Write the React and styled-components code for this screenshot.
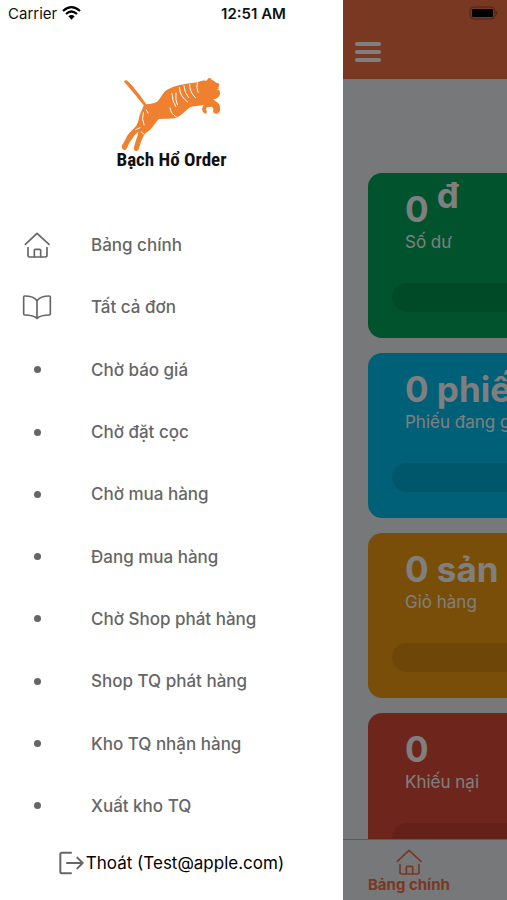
import React from 'react';
import styled, { createGlobalStyle } from 'styled-components';

const GlobalStyle = createGlobalStyle`
    * {
        box-sizing: border-box;
    }

    body {
        margin: 0;
        background: #fff;
        font-family: Inter, 'Noto Sans', sans-serif;
    }
`;

const Screen = styled.div`
    position: relative;
    display: grid;
    grid-template-columns: 23fr 11fr;
    height: 100vh;
    overflow: hidden;
`;

const StatusBar = styled.div`
    position: absolute;
    top: 0;
    left: 0;
    right: 0;
    z-index: 2;
    display: grid;
    grid-template-columns: 1fr auto 1fr;
    align-items: center;
    height: 26px;
    padding: 0 8px;
    font-size: 15px;
    color: #111;
    pointer-events: none;
`;

const Carrier = styled.div`
    display: flex;
    align-items: center;
    gap: 5px;
`;

const Clock = styled.div`
    font-weight: 600;
`;

const BatteryIcon = styled.svg`
    justify-self: end;
`;

const Drawer = styled.aside`
    display: flex;
    flex-direction: column;
    min-width: 0;
    min-height: 0;
    background: #fff;
`;

const Logo = styled.div`
    display: flex;
    flex-direction: column;
    align-items: center;
    height: 214px;
    padding-top: 75px;
`;

const LogoText = styled.div`
    font-family: 'Roboto Condensed', Roboto, sans-serif;
    font-size: 19px;
    line-height: 14px;
    font-weight: 700;
    color: #111;
    white-space: nowrap;
`;

const Menu = styled.nav`
    flex: 1;
    display: flex;
    flex-direction: column;
    min-height: 0;
`;

const MenuItem = styled.a`
    flex: 1;
    display: grid;
    grid-template-columns: 74px 1fr;
    align-items: center;
    column-gap: 17px;
    font-size: 17px;
    font-weight: 500;
    color: #666;
    text-decoration: none;
`;

const MenuIcon = styled.span`
    display: flex;
    justify-content: center;
`;

const Dot = styled.span`
    width: 7px;
    height: 7px;
    border-radius: 50%;
    background: #666;
`;

const Logout = styled.button`
    display: flex;
    align-items: center;
    justify-content: center;
    gap: 2px;
    height: 52px;
    margin-bottom: 11px;
    padding: 0;
    border: none;
    background: none;
    font: inherit;
    font-size: 17px;
    color: #000;
`;

const Page = styled.div`
    position: relative;
    min-width: 0;
    min-height: 0;
    overflow: hidden;
`;

const Scrim = styled.div`
    position: absolute;
    inset: 0;
    background: rgba(0, 0, 0, 0.5);
`;

// the page keeps its full width while the drawer pushes it aside
const PageContent = styled.div`
    display: flex;
    flex-direction: column;
    width: 100vw;
    height: 100%;
    background: #eef0f2;
`;

const Header = styled.header`
    display: flex;
    align-items: flex-end;
    height: 79px;
    padding: 0 12px 17px;
    background: #f07044;
`;

const Hamburger = styled.button`
    display: flex;
    flex-direction: column;
    gap: 4px;
    padding: 0;
    border: none;
    background: none;
`;

const Line = styled.span`
    width: 26px;
    height: 4px;
    border-radius: 2px;
    background: #fff;
`;

const Cards = styled.main`
    flex: 1;
    display: flex;
    flex-direction: column;
    gap: 15px;
    min-height: 0;
    padding: 94px 25px 0;
    overflow: hidden;
`;

const Card = styled.section`
    flex: none;
    display: flex;
    flex-direction: column;
    height: 165px;
    padding: 14px 24px 26px;
    border-radius: 14px;
    background: ${props => props.$color};
    color: #fff;
`;

const Amount = styled.div`
    padding-left: 13px;
    font-size: 35px;
    line-height: 45px;
    font-weight: 700;
`;

const Currency = styled.span`
    line-height: 0;
    vertical-align: 14px;
`;

const CardLabel = styled.div`
    padding-left: 13px;
    font-size: 17px;
    line-height: 20px;
`;

const CardFooter = styled.div`
    height: 29px;
    margin-top: auto;
    border-radius: 15px;
    background: rgba(0, 0, 0, 0.1);
`;

const TabBar = styled.nav`
    display: flex;
    height: 61px;
    border-top: 1px solid #b4b5b7;
`;

const Tab = styled.a`
    display: flex;
    flex-direction: column;
    align-items: center;
    width: 26%;
    padding-top: 8px;
    font-size: 15px;
    line-height: 18px;
    font-weight: 700;
    color: #f07044;
    text-decoration: none;
`;

const HomeIcon = () =>
    <svg width="28" height="28" viewBox="0 0 84 84" fill="none" stroke="currentColor" strokeWidth="5" strokeLinecap="round" strokeLinejoin="round">
        <path d="M7 40 L42 7 L78 40" />
        <path d="M15 50 V73 Q15 78 20 78 H67 Q72 78 72 73 V50" />
        <path d="M34 77 V58 Q34 55 37 55 H50 Q53 55 53 58 V77" />
    </svg>;

const BookIcon = () =>
    <svg width="30" height="26" viewBox="65 221 90 78" fill="none" stroke="currentColor" strokeWidth="5" strokeLinecap="round" strokeLinejoin="round">
        <path d="M110 241 C102 230 88 227 73 227 Q70 227 70 231 V281 Q70 284 73 284 C90 284 101 286 110 294 C119 286 130 284 147 284 Q150 284 150 281 V231 Q150 227 147 227 C132 227 118 230 110 241 V294" />
    </svg>;

const LogoutIcon = () =>
    <svg width="25" height="24" viewBox="186 395 75 72" fill="none" stroke="#666" strokeWidth="6" strokeLinecap="round" strokeLinejoin="round">
        <path d="M222 400 H195 Q190 400 190 405 V457 Q190 462 195 462 H222" />
        <path d="M210 431 H257 M241 415 L257 431 L241 447" />
    </svg>;

const WifiIcon = () =>
    <svg width="19" height="14" viewBox="0 0 57 42" fill="none" stroke="#000" strokeWidth="6.5">
        <path d="M3 15 Q28 -8 54 15" />
        <path d="M12 24 Q28 9 45 24" />
        <path d="M28.5 41 L19 31 Q28.5 23 38 31 Z" fill="#000" stroke="none" />
    </svg>;

const Tiger = () =>
    <svg width="104" height="78" viewBox="24 10 312 234">
        <path
            fill="#ee8030"
            d="M39 30 Q43 22 51 29 C66 44 82 64 106 98 C118 96 128 96 137 91 C148 84 153 66 166 56
            C184 44 207 39 226 36 C243 33 256 34 268 29 C276 24 283 29 288 26 C291 18 298 17 302 24
            C309 26 313 33 322 35 C327 38 325 44 322 47 C324 57 330 62 326 70 C322 78 316 83 307 82
            C311 89 322 91 326 101 C328 109 329 123 319 126 C308 128 304 121 308 113 L303 106
            C298 104 294 107 289 106 L284 113 C289 119 289 124 283 126 C275 124 271 112 275 106
            L278 99 C264 104 251 101 239 106 C227 113 215 129 198 137 C181 145 157 138 143 143
            C134 151 130 162 120 171 C112 181 103 182 98 193 C92 204 88 216 84 230
            C82 238 75 241 70 236 C66 229 72 220 74 209 C77 197 82 190 82 180
            C71 188 65 199 58 209 C51 218 51 229 44 234 C37 237 30 230 33 221
            C39 211 44 203 48 193 C54 182 68 172 76 162 C85 148 83 132 91 119 Q95 110 98 101
            C80 78 63 57 39 30 Z"
        />
        <g fill="none" stroke="#fff" strokeWidth="3" strokeLinecap="round">
            <path d="M183 66 Q184 90 194 104 M195 64 Q192 84 199 99" />
            <path d="M205 48 Q207 75 230 91 M219 43 Q220 63 233 78" />
            <path d="M236 37 Q235 61 253 78 M259 33 Q255 47 261 62" />
            <path d="M177 109 Q180 128 195 135 M97 123 Q91 141 99 160" />
            <path d="M106 115 L111 124 M74 174 L87 168 M91 181 L99 188" />
        </g>
        <path d="M318 54 L326 53" stroke="#fff" strokeWidth="2" />
    </svg>;

const menuItems = [
    { title: 'Bảng chính', icon: <HomeIcon /> },
    { title: 'Tất cả đơn', icon: <BookIcon /> },
    { title: 'Chờ báo giá' },
    { title: 'Chờ đặt cọc' },
    { title: 'Chờ mua hàng' },
    { title: 'Đang mua hàng' },
    { title: 'Chờ Shop phát hàng' },
    { title: 'Shop TQ phát hàng' },
    { title: 'Kho TQ nhận hàng' },
    { title: 'Xuất kho TQ' },
];

const cards = [
    { color: '#00a65a', amount: <>0 <Currency>đ</Currency></>, label: 'Số dư' },
    { color: '#00c0ef', amount: '0 phiếu', label: 'Phiếu đang gửi' },
    { color: '#f39c12', amount: '0 sản phẩm', label: 'Giỏ hàng' },
    { color: '#dd4b39', amount: '0', label: 'Khiếu nại' },
];

const App = () =>
    <>
        <GlobalStyle />
        <Screen>
            <StatusBar>
                <Carrier>Carrier <WifiIcon /></Carrier>
                <Clock>12:51 AM</Clock>
                <BatteryIcon width="30" height="14" viewBox="0 0 30 14">
                    <rect x="1" y="1" width="25" height="12" rx="4" fill="none" stroke="#4d2414" />
                    <rect x="3" y="3" width="21" height="8" rx="1" fill="#000" />
                    <path d="M27 5 Q30 7 27 9 Z" fill="#4d2414" />
                </BatteryIcon>
            </StatusBar>
            <Drawer>
                <Logo>
                    <Tiger />
                    <LogoText>Bạch Hổ Order</LogoText>
                </Logo>
                <Menu>
                    {menuItems.map(item =>
                        <MenuItem key={item.title} href="#">
                            <MenuIcon>{item.icon || <Dot />}</MenuIcon>
                            {item.title}
                        </MenuItem>
                    )}
                </Menu>
                <Logout type="button">
                    <LogoutIcon />
                    Thoát (Test@apple.com)
                </Logout>
            </Drawer>
            <Page>
                <PageContent>
                    <Header>
                        <Hamburger type="button" aria-label="Menu">
                            <Line />
                            <Line />
                            <Line />
                        </Hamburger>
                    </Header>
                    <Cards>
                        {cards.map(card =>
                            <Card key={card.label} $color={card.color}>
                                <Amount>{card.amount}</Amount>
                                <CardLabel>{card.label}</CardLabel>
                                <CardFooter />
                            </Card>
                        )}
                    </Cards>
                    <TabBar>
                        <Tab href="#">
                            <HomeIcon />
                            Bảng chính
                        </Tab>
                    </TabBar>
                </PageContent>
                <Scrim />
            </Page>
        </Screen>
    </>;

export default App;
